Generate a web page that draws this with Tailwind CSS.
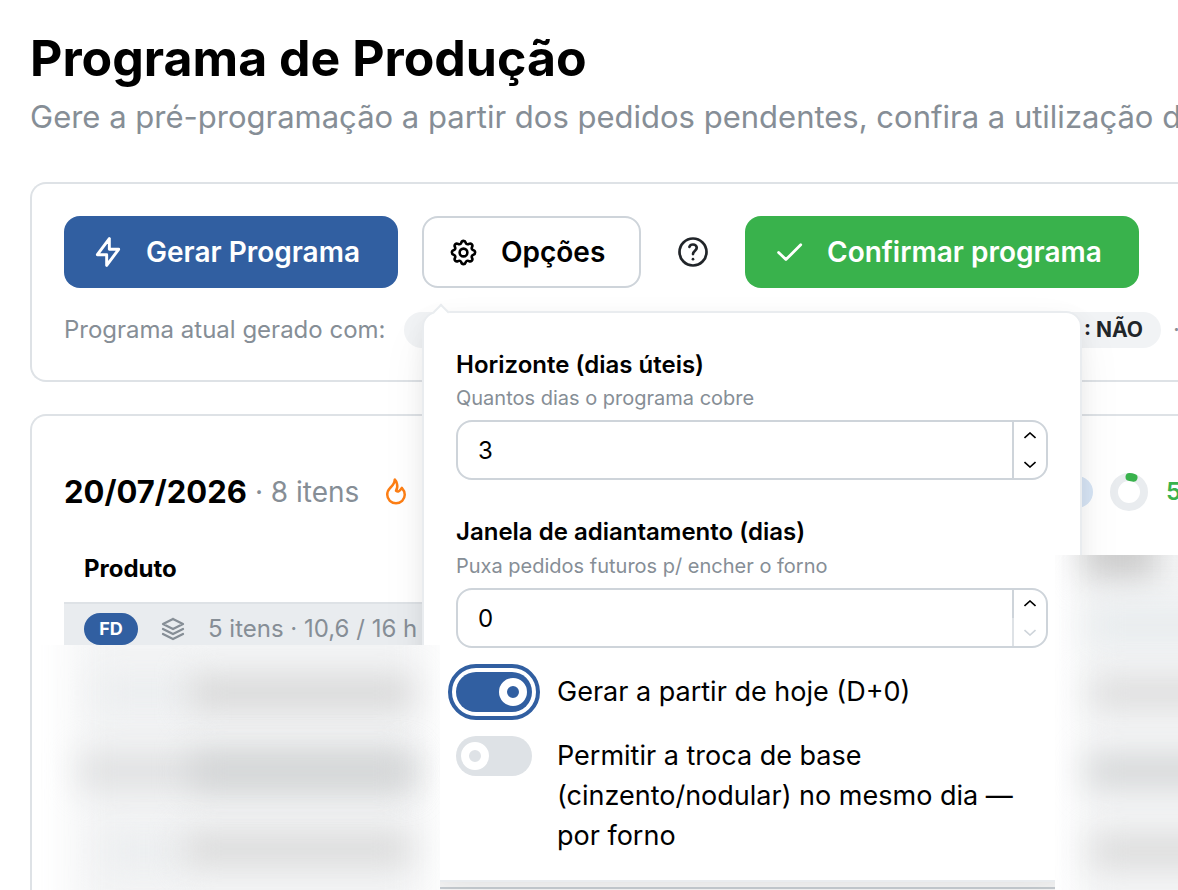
<!DOCTYPE html>
<html lang="pt-BR">
<head>
    <meta charset="UTF-8">
    <meta name="viewport" content="width=device-width, initial-scale=1.0">
    <title>Programa de Produção</title>
    <script src="https://cdn.jsdelivr.net/npm/@tailwindcss/browser@4"></script>
</head>
<body class="relative h-screen overflow-hidden bg-white font-['Inter','Liberation_Sans',sans-serif] text-black">
    <main class="pt-6 pl-[30px]">
        <header class="whitespace-nowrap">
            <h1 class="text-[50px] leading-[68px] font-bold">Programa de Produção</h1>
            <p class="text-[31px] leading-[50px] text-[#868e96]">Gere a pré-programação a partir dos pedidos pendentes, confira a utilização de</p>
        </header>

        <!-- Toolbar -->
        <section class="mt-10 flex flex-col gap-6 rounded-l-2xl border-2 border-r-0 border-[#dee2e6] py-8 pl-8">
            <div class="flex items-center gap-6 whitespace-nowrap">
                <button type="button" class="flex h-[72px] w-[334px] shrink-0 items-center gap-[22px] rounded-2xl bg-[#315fa1] pl-7 text-[28px] font-semibold text-white">
                    <svg class="size-8" viewBox="0 0 24 24" fill="none" stroke="currentColor" stroke-width="2.2" stroke-linecap="round" stroke-linejoin="round"><path d="M13 2v8h7l-9 12v-8H4l9-12"/></svg>
                    Gerar Programa
                </button>

                <div class="relative shrink-0">
                    <button type="button" aria-expanded="true" class="flex h-[72px] w-[219px] items-center gap-[22px] rounded-2xl border-2 border-[#ced4da] bg-white pl-6 text-[28px] font-semibold">
                        <svg class="size-[31px]" viewBox="0 0 24 24" fill="none" stroke="currentColor" stroke-width="2" stroke-linecap="round" stroke-linejoin="round"><path d="M10.325 4.317c.426-1.756 2.924-1.756 3.35 0a1.724 1.724 0 0 0 2.573 1.066c1.543-.94 3.31.826 2.37 2.37a1.724 1.724 0 0 0 1.065 2.572c1.756.426 1.756 2.924 0 3.35a1.724 1.724 0 0 0-1.066 2.573c.94 1.543-.826 3.31-2.37 2.37a1.724 1.724 0 0 0-2.572 1.065c-.426 1.756-2.924 1.756-3.35 0a1.724 1.724 0 0 0-2.573-1.066c-1.543.94-3.31-.826-2.37-2.37a1.724 1.724 0 0 0-1.065-2.572c-1.756-.426-1.756-2.924 0-3.35a1.724 1.724 0 0 0 1.066-2.573c-.94-1.543.826-3.31 2.37-2.37 1 .608 2.296.07 2.572-1.065z"/><path d="M9 12a3 3 0 1 0 6 0a3 3 0 0 0-6 0"/></svg>
                        Opções
                    </button>

                    <!-- Options popover -->
                    <div class="absolute top-[95px] left-0 z-10 w-[660px] rounded-2xl border-2 border-[#e9ecef] bg-white px-8 pt-8 pb-6 whitespace-normal shadow-[0_20px_50px_-6px_rgba(0,0,0,0.08),0_6px_20px_rgba(0,0,0,0.05)]">
                        <span class="absolute -top-[7px] left-[11px] size-3 rotate-45 border-t-2 border-l-2 border-[#e9ecef] bg-white"></span>
                        <form class="flex flex-col">
                            <label for="horizonte" class="text-2xl leading-[39px] font-semibold">Horizonte (dias úteis)</label>
                            <p class="text-xl leading-7 text-[#868e96]">Quantos dias o programa cobre</p>
                            <div class="mt-2 flex h-[60px] overflow-hidden rounded-2xl border-2 border-[#ced4da]">
                                <input id="horizonte" type="text" inputmode="numeric" value="3" class="min-w-0 flex-1 pt-0.5 pl-5 text-2xl outline-none">
                                <div class="flex w-[34px] flex-col border-l-2 border-[#ced4da]">
                                    <button type="button" aria-label="Aumentar" class="flex flex-1 items-center justify-center">
                                        <svg class="h-2 w-3" viewBox="0 0 12 8" fill="none" stroke="currentColor" stroke-width="1.6"><path d="M0.5 6L6 1l5.5 5"/></svg>
                                    </button>
                                    <button type="button" aria-label="Diminuir" class="flex flex-1 items-center justify-center">
                                        <svg class="h-2 w-3" viewBox="0 0 12 8" fill="none" stroke="currentColor" stroke-width="1.6"><path d="M0.5 2L6 7l5.5-5"/></svg>
                                    </button>
                                </div>
                            </div>

                            <label for="janela" class="mt-8 text-2xl leading-10 font-semibold">Janela de adiantamento (dias)</label>
                            <p class="text-xl leading-7 text-[#868e96]">Puxa pedidos futuros p/ encher o forno</p>
                            <div class="mt-2 flex h-[60px] overflow-hidden rounded-2xl border-2 border-[#ced4da]">
                                <input id="janela" type="text" inputmode="numeric" value="0" class="min-w-0 flex-1 pt-0.5 pl-5 text-2xl outline-none">
                                <div class="flex w-[34px] flex-col">
                                    <button type="button" aria-label="Aumentar" class="flex flex-1 items-center justify-center border-l-2 border-[#ced4da]">
                                        <svg class="h-2 w-3" viewBox="0 0 12 8" fill="none" stroke="currentColor" stroke-width="1.6"><path d="M0.5 6L6 1l5.5 5"/></svg>
                                    </button>
                                    <button type="button" aria-label="Diminuir" disabled class="flex flex-1 items-center justify-center border-l-2 border-[#dee2e6] text-[#ced4da]">
                                        <svg class="h-2 w-3" viewBox="0 0 12 8" fill="none" stroke="currentColor" stroke-width="1.6"><path d="M0.5 2L6 7l5.5-5"/></svg>
                                    </button>
                                </div>
                            </div>

                            <div class="mt-6 flex gap-[25px]">
                                <span class="relative h-10 w-[76px] shrink-0">
                                    <input id="hoje" type="checkbox" role="switch" checked class="block h-10 w-[76px] appearance-none rounded-full bg-[#dee2e6] outline-4 outline-offset-4 outline-[#315fa1] checked:bg-[#315fa1]">
                                    <span class="pointer-events-none absolute top-[6px] right-[5px] size-7 rounded-full border-[8px] border-white bg-[#315fa1]"></span>
                                </span>
                                <label for="hoje" class="text-[27px] leading-10">Gerar a partir de hoje (D+0)</label>
                            </div>
                            <div class="mt-6 flex gap-[25px]">
                                <span class="relative h-10 w-[76px] shrink-0">
                                    <input id="troca" type="checkbox" role="switch" class="block h-10 w-[76px] appearance-none rounded-full bg-[#dee2e6] checked:bg-[#315fa1]">
                                    <span class="pointer-events-none absolute top-[6px] left-[5px] size-7 rounded-full border-[8px] border-white bg-[#dee2e6]"></span>
                                </span>
                                <label for="troca" class="text-[27px] leading-10">Permitir a troca de base<br>(cinzento/nodular) no mesmo dia —<br>por forno</label>
                            </div>
                        </form>
                    </div>
                </div>

                <button type="button" aria-label="Ajuda" class="flex size-14 shrink-0 items-center justify-center text-[#212529]">
                    <svg class="size-9" viewBox="0 0 24 24" fill="none" stroke="currentColor" stroke-width="1.8" stroke-linecap="round" stroke-linejoin="round"><path d="M3 12a9 9 0 1 0 18 0a9 9 0 1 0-18 0"/><path d="M12 16.8v.01"/><path d="M9.6 8.6c.3-1 1.3-1.6 2.4-1.6c1.4 0 2.5.9 2.5 2.2c0 1.9-2.5 2-2.5 4.2"/></svg>
                </button>

                <button type="button" class="flex h-[72px] w-[394px] shrink-0 items-center gap-[22px] rounded-2xl bg-[#39b24c] pl-7 text-[28px] font-semibold text-white">
                    <svg class="size-8" viewBox="0 0 24 24" fill="none" stroke="currentColor" stroke-width="2.1" stroke-linecap="round" stroke-linejoin="round"><path d="M4.2 12.3l5.5 5.4L20.8 6.6"/></svg>
                    Confirmar programa
                </button>
            </div>

            <div class="flex h-9 items-center whitespace-nowrap text-2xl text-[#868e96]">
                <span>Programa atual gerado com:</span>
                <span class="ml-[18px] h-9 w-40 rounded-full bg-[#f1f3f5]"></span>
                <span class="ml-auto flex h-9 w-80 items-center justify-end rounded-full bg-[#f1f3f5] pr-[18px] text-[21px] font-bold text-[#212529]">: NÃO</span>
                <span class="ml-3 w-[5px]">·</span>
            </div>
        </section>

        <!-- Day card -->
        <section class="mt-8 h-[600px] rounded-tl-2xl border-t-2 border-l-2 border-[#dee2e6] pt-8 pl-8">
            <div class="flex h-[88px] items-center overflow-hidden whitespace-nowrap">
                <h2 class="text-[31px] font-bold">20/07/2026</h2>
                <span class="ml-2 text-[28px] text-[#868e96]">· 8 itens</span>
                <svg class="ml-[22px] size-[30px] text-[#fd7e14]" viewBox="0 0 24 24" fill="none" stroke="currentColor" stroke-width="2" stroke-linecap="round" stroke-linejoin="round"><path d="M12 10.941c2.333-3.308.167-7.823-1-8.941c0 3.395-2.235 5.299-3.667 6.706c-1.43 1.408-2.333 3.621-2.333 5.588c0 3.704 3.134 6.706 7 6.706s7-3.002 7-6.706c0-1.712-1.232-4.403-2.333-5.588c-2.084 3.353-3.257 3.353-4.667 2.235"/></svg>
                <span class="ml-auto h-8 w-40 rounded-full bg-[#d7e5f5]"></span>
                <svg class="ml-4 size-10 shrink-0" viewBox="0 0 40 40" fill="none" stroke-width="8"><circle cx="20" cy="20" r="15" stroke="#e9ecef"/><path d="M20.5 5a15 15 0 0 1 4 0.7" stroke="#39b24c" stroke-linecap="round"/></svg>
                <span class="ml-[17px] w-3 text-2xl font-semibold text-[#39b24c]">5%</span>
            </div>

            <table class="w-full text-left whitespace-nowrap">
                <thead>
                    <tr class="h-[67px] border-b-2 border-[#dee2e6]">
                        <th class="pl-5 text-2xl font-bold">Produto</th>
                    </tr>
                </thead>
                <tbody>
                    <tr class="h-[50px] bg-[#e9ecef]">
                        <td class="pl-5">
                            <div class="flex items-center text-2xl text-[#868e96]">
                                <span class="flex h-8 w-[54px] items-center justify-center rounded-full bg-[#315fa1] text-lg font-bold text-white">FD</span>
                                <svg class="ml-5 size-[30px]" viewBox="0 0 24 24" fill="none" stroke="currentColor" stroke-width="1.8" stroke-linecap="round" stroke-linejoin="round"><path d="M12 4L4 8l8 4l8-4l-8-4"/><path d="M4 12l8 4l8-4"/><path d="M4 16l8 4l8-4"/></svg>
                                <span class="ml-5">5 itens · 10,6 / 16 h</span>
                            </div>
                        </td>
                    </tr>
                    <tr class="h-[235px] border-b-2 border-[#ced4da]"><td></td></tr>
                </tbody>
            </table>
        </section>
    </main>

    <!-- Redacted rows, left column -->
    <div class="absolute top-[645px] bottom-0 left-10 z-20 w-[400px] overflow-hidden bg-white">
        <div class="absolute -top-10 -bottom-10 left-8 w-[356px] bg-[#f3f4f5] blur-[20px]"></div>
        <div class="absolute top-8 left-14 h-8 w-[100px] bg-[#ebedef] blur-[16px]"></div>
        <div class="absolute top-8 left-[150px] h-8 w-[222px] bg-[#d6d6d6] blur-[16px]"></div>
        <div class="absolute top-[108px] left-10 h-9 w-[332px] bg-[#dfe0e1] blur-[16px]"></div>
        <div class="absolute top-[108px] left-[150px] h-9 w-[222px] bg-[#d3d5d6] blur-[16px]"></div>
        <div class="absolute top-[190px] left-16 h-8 w-20 bg-[#ebedef] blur-[16px]"></div>
        <div class="absolute top-[188px] left-[144px] h-8 w-[226px] bg-[#d9d9d9] blur-[16px]"></div>
    </div>

    <!-- Redacted rows, right column -->
    <div class="absolute top-[555px] right-0 bottom-0 left-[1055px] z-20 overflow-hidden bg-white">
        <div class="absolute -top-8 -right-10 -bottom-10 left-5 bg-[#f4f5f6] blur-[16px]"></div>
        <div class="absolute -top-8 left-7 h-14 w-[74px] bg-[#cccccc] blur-[16px]"></div>
        <div class="absolute top-[50px] -right-10 left-8 h-10 bg-[#e8ecee] blur-[16px]"></div>
        <div class="absolute top-[124px] -right-10 left-9 h-7 bg-[#dadada] blur-[16px]"></div>
        <div class="absolute top-[200px] -right-10 left-8 h-8 bg-[#d3d5d6] blur-[16px]"></div>
        <div class="absolute top-[280px] -right-10 left-9 h-8 bg-[#dadada] blur-[16px]"></div>
    </div>
</body>
</html>
